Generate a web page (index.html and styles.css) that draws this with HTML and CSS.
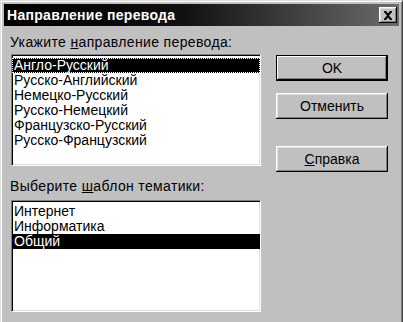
FILE: index.html
```html
<!DOCTYPE html>
<html lang="ru">
<head>
    <meta charset="UTF-8">
    <title>Направление перевода</title>
    <link rel="stylesheet" href="styles.css">
</head>
<body>
<div class="window">
    <div class="titlebar"><!--заголовок-->
        <span class="title">Направление перевода</span>
        <span class="close">
            <svg width="10" height="9" viewBox="0 0 10 9"><path d="M1 0h2l2 2.5 2-2.5h2v1l-3 3.5 3 3.5v1h-2l-2-2.5-2 2.5h-2v-1l3-3.5-3-3.5z" fill="#000"/></svg>
        </span>
    </div>
    <div class="content">
        <div class="left">
            <div class="label">Укажите <u>н</u>аправление перевода:</div>
            <ul class="listbox">
                <li class="selected focus">Англо-Русский</li>
                <li>Русско-Английский</li>
                <li>Немецко-Русский</li>
                <li>Русско-Немецкий</li>
                <li>Французско-Русский</li>
                <li>Русско-Французский</li>
            </ul>
            <div class="label second">Выберите <u>ш</u>аблон тематики:</div>
            <ul class="listbox">
                <li>Интернет</li>
                <li>Информатика</li>
                <li class="selected">Общий</li>
            </ul>
        </div>
        <div class="buttons">
            <div class="btn default">OK</div>
            <div class="btn">Отменить</div>
            <div class="btn help"><u>С</u>правка</div>
        </div>
    </div>
</div>
</body>
</html>
```

FILE: styles.css
```css
* {
    padding: 0;
    margin: 0;
    list-style: none;
}

body {
    background: #c0c0c0;
    font-family: "Liberation Sans", Arial, sans-serif;
    font-size: 14px;
    color: #000;
    overflow: hidden;
}

.window {
    width: 403px;
    height: 330px;
    box-sizing: border-box;
    padding: 3px;
    border-top: 1px solid #dfdfdf;
    border-left: 1px solid #dfdfdf;
    border-right: 1px solid #404040;
    box-shadow: inset 1px 1px #fff, inset -1px 0 #808080;
}

.titlebar {
    height: 22px;
    display: flex;
    align-items: center;
    justify-content: space-between;
    padding: 0 2px 0 3px;
    background: linear-gradient(to right, #000 0%, #101010 45%, #6c6c6c 100%);
}

.title {
    color: #fff;
    font-weight: bold;
    font-size: 14px;
    letter-spacing: 0.3px;
}

.close {
    width: 18px;
    height: 16px;
    box-sizing: border-box;
    display: flex;
    align-items: center;
    justify-content: center;
    background: #c0c0c0;
    box-shadow: inset -1px -1px #000, inset 1px 1px #fff, inset -2px -2px #808080, inset 2px 2px #dfdfdf;
}

.content {
    display: flex;
    align-items: flex-start;
    padding-left: 7px;
}

.left {
    width: 250px;
    padding-top: 8px;
}

.label {
    line-height: 16px;
    margin-left: -1px;
    letter-spacing: 0.35px;
}

.label.second {
    margin-top: 12px;
}

.listbox {
    height: 112px;
    box-sizing: border-box;
    margin-top: 4px;
    padding: 3px 2px;
    background: #fff;
    border: 1px solid;
    border-color: #808080 #fff #fff #808080;
    box-shadow: inset 1px 1px #000, inset -1px -1px #dfdfdf;
}

.label.second + .listbox {
    margin-top: 6px;
}

.listbox li {
    line-height: 15px;
    height: 15px;
    padding-left: 2px;
    margin: 0 -2px;
}

.listbox li.selected {
    background: #000;
    color: #fff;
}

.listbox li.focus {
    outline: 1px dotted #fff;
    outline-offset: -1px;
}

.buttons {
    margin-left: 15px;
    margin-top: 29px;
    display: flex;
    flex-direction: column;
    gap: 12px;
}

.btn {
    width: 112px;
    height: 26px;
    box-sizing: border-box;
    display: flex;
    align-items: center;
    justify-content: center;
    background: #c0c0c0;
    box-shadow: inset -1px -1px #000, inset 1px 1px #fff, inset -2px -2px #808080, inset 2px 2px #dfdfdf;
}

.btn.default {
    box-shadow: inset 0 0 0 1px #000, inset -2px -2px #000, inset 2px 2px #fff, inset -3px -3px #808080;
}

.btn.help {
    margin-top: 15px;
}
```
